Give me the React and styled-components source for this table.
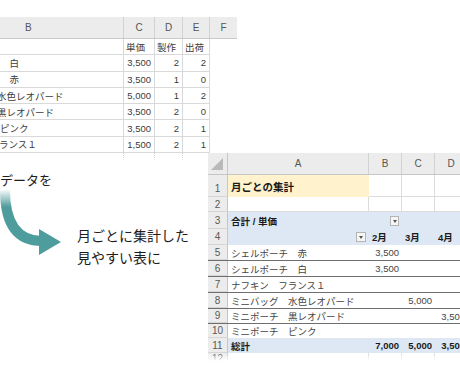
import React from 'react';
import styled, { createGlobalStyle } from 'styled-components';

const GlobalStyle = createGlobalStyle`
  body {
    margin: 0;
    background: #ffffff;
  }
`;

const SHEET_FONT = '"Liberation Sans", "Noto Sans CJK JP", sans-serif';
const TOP_COLS = '124px 31px 28px 27px 27px';
const PIVOT_COLS = '20px 141px 33px 33px 33px';

const Page = styled.div`
  width: 460px;
  height: 380px;
  overflow: hidden;
  background: #ffffff;
  font-family: ${SHEET_FONT};
`;

const TopSheet = styled.div`
  width: 237px;
  margin-top: 17px;
`;

const TopHead = styled.div`
  display: grid;
  grid-template-columns: ${TOP_COLS};
  height: 22px;
  background: #ececec;
  border-bottom: 1px solid #c9c9c9;
  box-sizing: border-box;
`;

const HeadCell = styled.div`
  display: flex;
  align-items: center;
  justify-content: ${p => (p.$left ? 'flex-start' : 'center')};
  padding-left: ${p => (p.$left ? '25px' : '0')};
  border-right: ${p => (p.$last ? 'none' : '1px solid #d2d2d2')};
  color: #555555;
  font-size: 10px;
`;

const TopRow = styled.div`
  display: grid;
  grid-template-columns: ${TOP_COLS};
  height: 16.3px;
`;

const TopCell = styled.div`
  display: flex;
  align-items: center;
  justify-content: ${p => (p.$align === 'right' ? 'flex-end' : 'flex-start')};
  padding: 0 3px 0 2px;
  border-right: 1px solid #d9d9d9;
  border-bottom: 1px solid #d9d9d9;
  box-sizing: border-box;
  overflow: hidden;
  white-space: nowrap;
  color: #3c3c3c;
  font-size: 9.5px;
`;

const NameCell = styled(TopCell)`
  padding: 0;
  text-indent: ${p => p.$indent}px;
`;

const Blank = styled.div``;

const Lower = styled.div`
  display: flex;
  align-items: flex-start;
`;

const LeftPane = styled.div`
  width: 208px;
  flex-shrink: 0;
`;

const Tail = styled.div`
  display: grid;
  grid-template-columns: 124px 31px 28px 27px;
  height: 9px;
  mask-image: linear-gradient(#000, transparent);
`;

const TailCell = styled.div`
  border-right: 1px dotted #bdbdbd;
`;

const Caption = styled.div`
  margin-top: 9px;
  font-family: "Noto Sans CJK JP", sans-serif;
  font-size: 13px;
  line-height: 18px;
  color: #1e1e1e;
`;

const ArrowRow = styled.div`
  display: flex;
  align-items: flex-start;
`;

const Lead = styled.div`
  margin: 35px 0 0 13px;
  font-family: "Noto Sans CJK JP", sans-serif;
  font-size: 14px;
  line-height: 22px;
  color: #1e1e1e;
  white-space: nowrap;
`;

const Pivot = styled.div`
  width: 260px;
  flex-shrink: 0;
`;

const PivotRow = styled.div`
  display: grid;
  grid-template-columns: ${PIVOT_COLS};
  height: ${p => p.$h}px;
  background: ${p => p.$bg || '#ffffff'};
  border-bottom: ${p => (p.$rule ? '1px solid #6f6f6f' : 'none')};
  box-sizing: border-box;
`;

const PivotHead = styled(PivotRow)`
  background: #ececec;
  border-bottom: 1px solid #c6c6c6;
`;

const PivotTail = styled(PivotRow)`
  mask-image: linear-gradient(#000, transparent);
`;

const Corner = styled.div`
  position: relative;
  border-right: 1px solid #c6c6c6;
  &::after {
    content: '';
    position: absolute;
    right: 4px;
    bottom: 4px;
    border-style: solid;
    border-width: 0 0 12px 12px;
    border-color: transparent transparent #b9b9b9 transparent;
  }
`;

const RowNum = styled.div`
  display: flex;
  align-items: ${p => (p.$bottom ? 'flex-end' : 'center')};
  justify-content: center;
  padding-bottom: ${p => (p.$bottom ? '2px' : '0')};
  background: #ececec;
  border-right: 1px solid #c6c6c6;
  border-bottom: 1px solid #d6d6d6;
  box-sizing: border-box;
  color: #595959;
  font-size: 10px;
`;

const PCell = styled.div`
  display: flex;
  align-items: center;
  justify-content: ${p => (p.$align === 'right' ? 'flex-end' : 'flex-start')};
  gap: 4px;
  padding: 0 3px;
  background: ${p => p.$bg || 'transparent'};
  border-right: ${p => (p.$grid ? '1px solid #dcdcdc' : 'none')};
  border-bottom: ${p => (p.$grid ? '1px solid #dcdcdc' : 'none')};
  box-sizing: border-box;
  overflow: hidden;
  white-space: nowrap;
  color: ${p => (p.$bold ? '#1a1a1a' : '#454545')};
  font-size: ${p => (p.$big ? '10.5px' : '9.5px')};
  font-weight: ${p => (p.$bold ? 700 : 400)};
`;

const DropBtn = styled.span`
  display: inline-block;
  position: relative;
  width: 10px;
  height: 10px;
  margin-left: ${p => p.$offset || 0}px;
  background: #f6f6f6;
  border: 1px solid #b4b4b4;
  box-sizing: border-box;
  &::after {
    content: '';
    position: absolute;
    left: 2px;
    top: 3px;
    border-style: solid;
    border-width: 3px 2px 0 2px;
    border-color: #555555 transparent transparent transparent;
  }
`;

const topRows = [
  { name: '\u3000白', indent: 0, c: '3,500', d: '2', e: '2' },
  { name: '\u3000赤', indent: 0, c: '3,500', d: '1', e: '0' },
  { name: '水色レオパード', indent: -3, c: '5,000', d: '1', e: '2' },
  { name: '黒レオパード', indent: -3, c: '3,500', d: '2', e: '0' },
  { name: 'ピンク', indent: 0, c: '3,500', d: '2', e: '1' },
  { name: 'ランス１', indent: -1, c: '1,500', d: '2', e: '1' },
];

const pivotRows = [
  { n: 5, name: 'シェルポーチ　赤', vals: ['3,500', '', ''], h: 16 },
  { n: 6, name: 'シェルポーチ　白', vals: ['3,500', '', ''], h: 16 },
  { n: 7, name: 'ナフキン　フランス１', vals: ['', '', ''], h: 16 },
  { n: 8, name: 'ミニバッグ　水色レオパード', vals: ['', '5,000', ''], h: 16 },
  { n: 9, name: 'ミニポーチ　黒レオパード', vals: ['', '', '3,500'], h: 15 },
  { n: 10, name: 'ミニポーチ　ピンク', vals: ['', '', ''], h: 14 },
];

const BLUE = '#dde8f4';

const Arrow = () => (
  <svg width="64" height="70" viewBox="0 0 64 70">
    <defs>
      <linearGradient id="fade" x1="0" y1="0" x2="0" y2="18" gradientUnits="userSpaceOnUse">
        <stop offset="0" stopColor="#4f9c9c" stopOpacity="0" />
        <stop offset="1" stopColor="#4f9c9c" stopOpacity="1" />
      </linearGradient>
    </defs>
    <path d="M5 1 Q5 52 42 52" fill="none" stroke="url(#fade)" strokeWidth="10" />
    <polygon points="39,40 61,53 39,66" fill="#4f9c9c" />
  </svg>
);

const App = () => {
  return (
    <Page>
      <GlobalStyle />
      <TopSheet>
        <TopHead>
          <HeadCell $left>B</HeadCell>
          <HeadCell>C</HeadCell>
          <HeadCell>D</HeadCell>
          <HeadCell>E</HeadCell>
          <HeadCell $last>F</HeadCell>
        </TopHead>
        <TopRow>
          <NameCell $indent={0}></NameCell>
          <TopCell>単価</TopCell>
          <TopCell>製作</TopCell>
          <TopCell>出荷</TopCell>
          <Blank />
        </TopRow>
        {topRows.map(row => (
          <TopRow key={row.name}>
            <NameCell $indent={row.indent}>{row.name}</NameCell>
            <TopCell $align="right">{row.c}</TopCell>
            <TopCell $align="right">{row.d}</TopCell>
            <TopCell $align="right">{row.e}</TopCell>
            <Blank />
          </TopRow>
        ))}
      </TopSheet>

      <Lower>
        <LeftPane>
          <Tail>
            <TailCell />
            <TailCell />
            <TailCell />
            <TailCell />
          </Tail>
          <Caption>データを</Caption>
          <ArrowRow>
            <Arrow />
            <Lead>
              月ごとに集計した
              <br />
              見やすい表に
            </Lead>
          </ArrowRow>
        </LeftPane>

        <Pivot>
          <PivotHead $h={22}>
            <Corner />
            <HeadCell>A</HeadCell>
            <HeadCell>B</HeadCell>
            <HeadCell>C</HeadCell>
            <HeadCell>D</HeadCell>
          </PivotHead>
          <PivotRow $h={22}>
            <RowNum $bottom>1</RowNum>
            <PCell $bg="#fff2cc" $bold $big>月ごとの集計</PCell>
            <PCell $grid />
            <PCell $grid />
            <PCell $grid />
          </PivotRow>
          <PivotRow $h={15}>
            <RowNum>2</RowNum>
            <PCell $grid />
            <PCell $grid />
            <PCell $grid />
            <PCell $grid />
          </PivotRow>
          <PivotRow $h={17} $bg={BLUE}>
            <RowNum>3</RowNum>
            <PCell $bold>合計 / 単価</PCell>
            <PCell>
              <DropBtn $offset={18} />
            </PCell>
            <PCell />
            <PCell />
          </PivotRow>
          <PivotRow $h={16} $bg={BLUE}>
            <RowNum>4</RowNum>
            <PCell $align="right">
              <DropBtn />
            </PCell>
            <PCell $bold>2月</PCell>
            <PCell $bold>3月</PCell>
            <PCell $bold>4月</PCell>
          </PivotRow>
          {pivotRows.map((row, i) => (
            <PivotRow key={row.n} $h={row.h} $rule={i < pivotRows.length - 1}>
              <RowNum>{row.n}</RowNum>
              <PCell>{row.name}</PCell>
              {row.vals.map((v, j) => (
                <PCell key={j} $align="right">{v}</PCell>
              ))}
            </PivotRow>
          ))}
          <PivotRow $h={15} $bg={BLUE}>
            <RowNum>11</RowNum>
            <PCell $bold>総計</PCell>
            <PCell $bold $align="right">7,000</PCell>
            <PCell $bold $align="right">5,000</PCell>
            <PCell $bold $align="right">3,500</PCell>
          </PivotRow>
          <PivotTail $h={8}>
            <RowNum>12</RowNum>
            <PCell $grid />
            <PCell $grid />
            <PCell $grid />
            <PCell $grid />
          </PivotTail>
        </Pivot>
      </Lower>
    </Page>
  );
};

export default App;
